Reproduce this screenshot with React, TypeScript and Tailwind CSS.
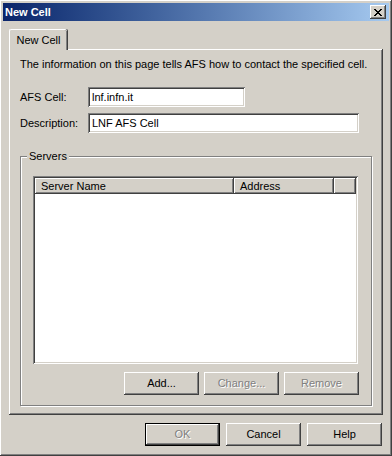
const raised =
  "shadow-[inset_-1px_-1px_#404040,inset_1px_1px_#ffffff,inset_-2px_-2px_#808080,inset_2px_2px_#d4d0c8]";
const sunken =
  "shadow-[inset_1px_1px_#808080,inset_-1px_-1px_#ffffff,inset_2px_2px_#404040,inset_-2px_-2px_#d4d0c8]";

interface ButtonProps {
  label: string;
  disabled?: boolean;
  isDefault?: boolean;
}

const Button: React.FC<ButtonProps> = ({ label, disabled, isDefault }) => {
  const inner = (
    <div
      className={`flex items-center justify-center bg-[#d4d0c8] ${raised} ${
        isDefault ? "w-[73px] h-[21px]" : "w-[75px] h-[23px]"
      }`}
    >
      <span
        className={
          disabled
            ? "text-[#808080] [text-shadow:1px_1px_#ffffff]"
            : "text-black"
        }
      >
        {label}
      </span>
    </div>
  );
  if (isDefault) {
    return <div className="border border-black w-[75px] h-[23px]">{inner}</div>;
  }
  return inner;
};

const Field: React.FC<{ label: string; value: string; width: string }> = ({
  label,
  value,
  width,
}) => {
  return (
    <div className="flex items-center">
      <span className="w-[68px]">{label}</span>
      <div className={`h-[20px] bg-white ${sunken} ${width} flex items-center pl-[4px]`}>
        {value}
      </div>
    </div>
  );
};

export default function App() {
  return (
    <div
      className={`w-[392px] h-[456px] bg-[#d4d0c8] p-[3px] flex flex-col text-[11px] leading-[13px] text-black ${raised}`}
      style={{ fontFamily: '"Liberation Sans", Arial, sans-serif' }}
    >
      {/* title bar */}
      <div className="h-[18px] flex items-center justify-between pl-[2px] pr-[3px] bg-gradient-to-r from-[#0a246a] to-[#a6caf0]">
        <span className="text-white font-bold">New Cell</span>
        <div className={`w-[16px] h-[14px] bg-[#d4d0c8] flex items-center justify-center ${raised}`}>
          <svg width="8" height="7" viewBox="0 0 8 7" shapeRendering="crispEdges">
            <path
              d="M0 0h2v1h-2zM6 0h2v1h-2zM1 1h2v1h-2zM5 1h2v1h-2zM2 2h4v1h-4zM3 3h2v1h-2zM2 4h4v1h-4zM1 5h2v1h-2zM5 5h2v1h-2zM0 6h2v1h-2zM6 6h2v1h-2z"
              fill="#000"
            />
          </svg>
        </div>
      </div>

      <div className="flex flex-col px-[6px] pt-[8px]">
        {/* tab */}
        <div className="relative z-10 -mb-px w-[58px] h-[21px] bg-[#d4d0c8] border-l border-t border-white rounded-tl-[2px] rounded-tr-[2px] shadow-[inset_-1px_0_#808080,1px_0_#404040] flex items-center justify-center">
          New Cell
        </div>

        {/* tab page */}
        <div className="w-[374px] h-[366px] bg-[#d4d0c8] pt-[9px] px-[11px] flex flex-col shadow-[inset_-1px_-1px_#404040,inset_1px_1px_#ffffff,inset_-2px_-2px_#808080]">
          <p>The information on this page tells AFS how to contact the specified cell.</p>

          <div className="mt-[16px] flex flex-col gap-[6px]">
            <Field label="AFS Cell:" value="lnf.infn.it" width="w-[157px]" />
            <Field label="Description:" value="LNF AFS Cell" width="w-[271px]" />
          </div>

          <fieldset className="mt-[17px] w-[352px] h-[256px] border border-[#808080] shadow-[1px_1px_#ffffff,inset_1px_1px_#ffffff] px-[12px] pb-[10px] pt-[13px] flex flex-col">
            <legend className="-ml-[6px] px-[2px] bg-[#d4d0c8]">Servers</legend>

            {/* list view */}
            <div className={`w-[325px] h-[188px] bg-white p-[2px] flex flex-col ${sunken}`}>
              <div className="flex h-[16px]">
                <div className={`w-[199px] h-full bg-[#d4d0c8] pl-[6px] flex items-center ${raised}`}>
                  Server Name
                </div>
                <div className={`w-[100px] h-full bg-[#d4d0c8] pl-[6px] flex items-center ${raised}`}>
                  Address
                </div>
                <div className={`flex-1 h-full bg-[#d4d0c8] ${raised}`} />
              </div>
            </div>

            <div className="mt-[8px] flex justify-end gap-[5px]">
              <Button label="Add..." />
              <Button label="Change..." disabled />
              <Button label="Remove" disabled />
            </div>
          </fieldset>
        </div>

        {/* dialog buttons */}
        <div className="mt-[8px] flex justify-end gap-[6px] pr-[1px]">
          <Button label="OK" disabled isDefault />
          <Button label="Cancel" />
          <Button label="Help" />
        </div>
      </div>
    </div>
  );
}
